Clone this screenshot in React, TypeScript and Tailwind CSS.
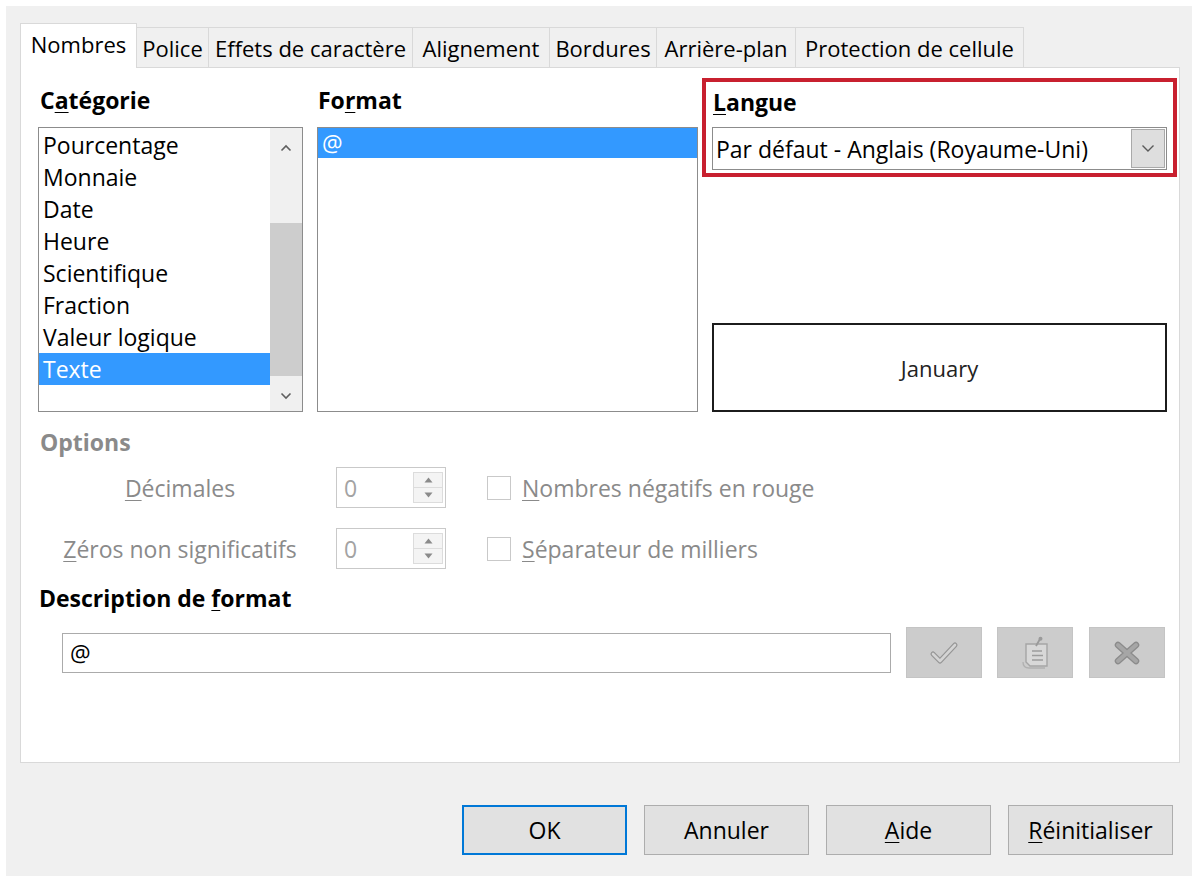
import type { ReactNode } from "react";

// Mnemonic letter, underlined the way Windows dialogs mark access keys.
function U({ children }: { children: ReactNode }) {
  return <span className="underline decoration-1 underline-offset-[3px]">{children}</span>;
}

const tabs = [
  { label: "Nombres", w: "w-[117px]" },
  { label: "Police", w: "w-[72px]" },
  { label: "Effets de caractère", w: "w-[204px]" },
  { label: "Alignement", w: "w-[137px]" },
  { label: "Bordures", w: "w-[107px]" },
  { label: "Arrière-plan", w: "w-[139px]" },
  { label: "Protection de cellule", w: "w-[228px]" },
];

const categories = [
  "Pourcentage",
  "Monnaie",
  "Date",
  "Heure",
  "Scientifique",
  "Fraction",
  "Valeur logique",
  "Texte",
];

function Chevron({ up, className }: { up?: boolean; className?: string }) {
  return (
    <svg width="12" height="8" viewBox="0 0 12 8" className={className}>
      <path
        d={up ? "M1.5 6.5 L6 2 L10.5 6.5" : "M1.5 1.5 L6 6 L10.5 1.5"}
        fill="none"
        stroke="#5f5f5f"
        strokeWidth="1.6"
      />
    </svg>
  );
}

function SpinBox() {
  return (
    <div className="ml-[14px] flex h-[41px] w-[110px] items-stretch border border-[#c9c9c9] bg-white">
      <div className="flex flex-1 items-center pl-[7px] text-[#a3a3a3]">0</div>
      <div className="my-[4px] mr-[2px] flex w-[30px] flex-col border border-[#dcdcdc] bg-[#f4f4f4]">
        <div className="flex flex-1 items-center justify-center border-b border-[#dcdcdc]">
          <svg width="9" height="6" viewBox="0 0 9 6">
            <path d="M0.5 5.5 L4.5 0.5 L8.5 5.5 Z" fill="#8a8a8a" />
          </svg>
        </div>
        <div className="flex flex-1 items-center justify-center">
          <svg width="9" height="6" viewBox="0 0 9 6">
            <path d="M0.5 0.5 L4.5 5.5 L8.5 0.5 Z" fill="#8a8a8a" />
          </svg>
        </div>
      </div>
    </div>
  );
}

function OptionRow({ label, check, mt }: { label: ReactNode; check: ReactNode; mt: string }) {
  return (
    <div className={`flex h-[41px] items-center pl-[17px] ${mt}`}>
      <div className="w-[284px] text-center text-[#8a8a8a]">{label}</div>
      <SpinBox />
      <div className="ml-[41px] h-[24px] w-[24px] border border-[#c9c9c9] bg-white" />
      <div className="ml-[11px] text-[#8a8a8a]">{check}</div>
    </div>
  );
}

function IconButton({ children, ml }: { children: ReactNode; ml: string }) {
  return (
    <div
      className={`flex h-[51px] w-[76px] items-center justify-center border border-[#c4c4c4] bg-[#cccccc] ${ml}`}
    >
      {children}
    </div>
  );
}

function DialogButton({ children, primary }: { children: ReactNode; primary?: boolean }) {
  return (
    <div
      className={`flex h-[50px] w-[165px] items-center justify-center bg-[#e1e1e1] text-black ${
        primary ? "border-2 border-[#0078d7]" : "border border-[#adadad]"
      }`}
    >
      {children}
    </div>
  );
}

export default function App() {
  return (
    <div className="h-[876px] w-[1192px] overflow-hidden bg-white pl-[6px] pt-[6px] font-['Open_Sans',sans-serif] text-[23px] leading-[28px] text-black">
      <div className="h-full w-full bg-[#f0f0f0]">
        {/* tab strip */}
        <div className="flex items-end pl-[14px] pt-[17px] text-[22px]">
          {tabs.map((t, i) =>
            i === 0 ? (
              <div
                key={t.label}
                className={`relative z-10 -mb-px flex h-[45px] items-center justify-center border-x border-t border-[#d9d9d9] bg-white pb-[4px] ${t.w}`}
              >
                {t.label}
              </div>
            ) : (
              <div
                key={t.label}
                className={`flex h-[40px] items-center justify-center border-r border-t border-[#d9d9d9] bg-[#f0f0f0] ${t.w}`}
              >
                {t.label}
              </div>
            )
          )}
        </div>

        {/* page */}
        <div className="ml-[14px] h-[696px] w-[1160px] border border-[#d9d9d9] bg-white">
          <div className="flex pl-[17px]">
            <div className="w-[265px]">
              <div className="pl-[2px] pt-[18px] font-bold">
                C<U>a</U>tégorie
              </div>
              <div className="mt-[13px] flex h-[285px] border border-[#8c8c8c] bg-white">
                <div className="flex-1 pt-px">
                  {categories.map((c) => (
                    <div
                      key={c}
                      className={`h-[32px] pl-[4px] leading-[32px] ${
                        c === "Texte" ? "bg-[#3399ff] text-white" : ""
                      }`}
                    >
                      {c}
                    </div>
                  ))}
                </div>
                <div className="flex w-[32px] flex-col bg-[#f0f0f0]">
                  <div className="flex h-[40px] items-center justify-center">
                    <Chevron up />
                  </div>
                  <div className="h-[55px]" />
                  <div className="h-[153px] bg-[#cdcdcd]" />
                  <div className="flex flex-1 items-center justify-center pt-[4px]">
                    <Chevron />
                  </div>
                </div>
              </div>
            </div>

            <div className="ml-[14px] w-[381px]">
              <div className="pl-px pt-[18px] font-bold">
                Fo<U>r</U>mat
              </div>
              <div className="mt-[13px] h-[285px] border border-[#8c8c8c] bg-white">
                <div className="h-[30px] bg-[#3399ff] pl-[4px] leading-[30px] text-white">@</div>
              </div>
            </div>

            <div className="ml-[4px] w-[475px] pt-[10px]">
              <div className="border-4 border-[#c8202f] px-[6px] pb-[3px] pt-[6px]">
                <div className="pl-px font-bold">
                  <U>L</U>angue
                </div>
                <div className="mt-[11px] flex h-[43px] border border-[#8c8c8c] bg-white">
                  <div className="flex flex-1 items-center pl-[3px]">Par défaut - Anglais (Royaume-Uni)</div>
                  <div className="m-px flex w-[34px] items-center justify-center border border-[#a9a9a9] bg-[#dedede]">
                    <svg width="14" height="9" viewBox="0 0 14 9">
                      <path d="M1.5 1.5 L7 7 L12.5 1.5" fill="none" stroke="#5a5a5a" strokeWidth="1.4" />
                    </svg>
                  </div>
                </div>
              </div>
              <div className="ml-[10px] mt-[146px] flex h-[89px] w-[455px] items-center justify-center border-2 border-[#1c1c1c] bg-white text-[22px] text-[#222]">
                January
              </div>
            </div>
          </div>

          {/* options */}
          <div className="mt-[16px] pl-[19px] font-bold text-[#8a8a8a]">Options</div>
          <OptionRow
            mt="mt-[11px]"
            label={
              <>
                <U>D</U>écimales
              </>
            }
            check={
              <>
                <U>N</U>ombres négatifs en rouge
              </>
            }
          />
          <OptionRow
            mt="mt-[20px]"
            label={
              <>
                <U>Z</U>éros non significatifs
              </>
            }
            check={
              <>
                <U>S</U>éparateur de milliers
              </>
            }
          />

          <div className="mt-[15px] pl-[18px] font-bold">
            Description de <U>f</U>ormat
          </div>
          <div className="mt-[15px] flex h-[51px] items-center pl-[41px]">
            <div className="flex h-[40px] w-[829px] items-center border border-[#ababab] bg-white pl-[7px]">@</div>
            <IconButton ml="ml-[15px]">
              <svg width="32" height="26" viewBox="0 0 32 26">
                <path d="M5 14 L12 21 L27 5" fill="none" stroke="#959595" strokeWidth="5" strokeLinejoin="round" strokeLinecap="round" />
                <path d="M5 14 L12 21 L27 5" fill="none" stroke="#d4d4d4" strokeWidth="2.6" strokeLinejoin="round" strokeLinecap="round" />
              </svg>
            </IconButton>
            <IconButton ml="ml-[15px]">
              <svg width="34" height="34" viewBox="0 0 34 34">
                <path d="M8 8 H29 V30 H12 L8 26 Z" fill="#d8d8d8" stroke="#a5a5a5" strokeWidth="1.4" />
                <path d="M5 26 Q5 32 11 32 H27" fill="none" stroke="#b0b0b0" strokeWidth="1.3" />
                <path d="M18 10 L22 3" stroke="#9a9a9a" strokeWidth="1.8" />
                <circle cx="22.5" cy="2.8" r="2" fill="#9a9a9a" />
                <path d="M14 15 H24 M14 19.5 H25 M14 24 H25" stroke="#9c9c9c" strokeWidth="1.6" />
              </svg>
            </IconButton>
            <IconButton ml="ml-[16px]">
              <svg width="26" height="24" viewBox="0 0 26 24">
                <path d="M4 4 L22 20 M22 4 L4 20" stroke="#8b8b8b" strokeWidth="6.5" strokeLinecap="round" />
                <path d="M4 4 L22 20 M22 4 L4 20" stroke="#a6a6a6" strokeWidth="4" strokeLinecap="round" />
              </svg>
            </IconButton>
          </div>
        </div>

        {/* dialog buttons */}
        <div className="ml-[456px] mt-[42px] flex gap-[17px]">
          <DialogButton primary>OK</DialogButton>
          <DialogButton>Annuler</DialogButton>
          <DialogButton>
            <span>
              <U>A</U>ide
            </span>
          </DialogButton>
          <DialogButton>
            <span>
              <U>R</U>éinitialiser
            </span>
          </DialogButton>
        </div>
      </div>
    </div>
  );
}
